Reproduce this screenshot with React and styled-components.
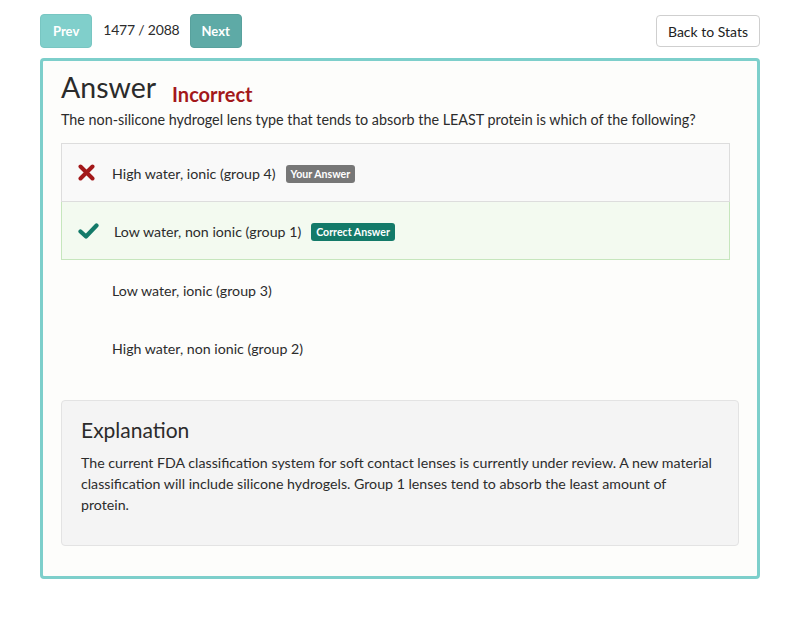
import React from "react";
import styled, { createGlobalStyle } from "styled-components";

const Global = createGlobalStyle`
  html, body { margin: 0; padding: 0; background: #ffffff; }
  body { font-family: Lato, "Open Sans", sans-serif; color: #2c2c2c; font-size: 14px; }
  * { box-sizing: border-box; }
`;

const Page = styled.div`
  width: 800px;
  padding: 14px 40px 40px 40px;
`;

const TopBar = styled.div`
  display: flex;
  align-items: center;
  height: 34px;
  margin-bottom: 10px;
`;

const NavButton = styled.button`
  font-family: Lato, sans-serif;
  font-weight: 700;
  font-size: 13px;
  color: #ffffff;
  background: ${(p) => (p.$dim ? "#80cfcb" : "#5eaaa6")};
  border: 1px solid ${(p) => (p.$dim ? "#78c6c2" : "#58a19d")};
  border-radius: 4px;
  height: 34px;
  padding: 0 ${(p) => (p.$dim ? "12px" : "11px")};
  cursor: pointer;
`;

const Counter = styled.span`
  font-size: 14px;
  letter-spacing: -0.2px;
  color: #2c2c2c;
  margin: 0 10px 0 11px;
  position: relative;
  top: -2px;
`;

const Spacer = styled.div`
  flex: 1;
`;

const OutlineButton = styled.button`
  font-family: Lato, sans-serif;
  font-size: 14px;
  color: #222;
  background: #fff;
  border: 1px solid #cfcfcf;
  border-radius: 4px;
  height: 32px;
  padding: 0 11px;
`;

const Card = styled.div`
  border: 3px solid #7dcfcb;
  border-radius: 4px;
  background: #fdfdfb;
  padding: 6px 18px 30px 18px;
`;

const HeaderRow = styled.div`
  display: flex;
  align-items: baseline;
  gap: 16px;
  height: 40px;
`;

const Title = styled.h1`
  margin: 0;
  font-weight: 400;
  font-size: 28.5px;
  color: #2b2b2b;
  line-height: 40px;
`;

const Status = styled.span`
  font-weight: 700;
  font-size: 20px;
  color: #a3181a;
  position: relative;
  top: 4px;
`;

const Question = styled.p`
  margin: 3px 0 13px 0;
  font-size: 14.35px;
  line-height: 20px;
  color: #2c2c2c;
`;

const List = styled.div`
  display: flex;
  flex-direction: column;
  margin-right: 9px;
  margin-bottom: 24px;
`;

const Option = styled.div`
  display: flex;
  align-items: center;
  height: ${(p) => (p.$first ? "59px" : "58px")};
  padding-left: 16px;
  padding-top: 2px;
  background: ${(p) =>
    p.$kind === "wrong" ? "#f9f9f9" : p.$kind === "correct" ? "#f3faf0" : "transparent"};
  border: 1px solid
    ${(p) => (p.$kind === "wrong" ? "#dddddd" : p.$kind === "correct" ? "#c6e6bd" : "transparent")};
  border-top: ${(p) => (p.$kind === "correct" ? "none" : undefined)};
  font-size: 14.2px;
  color: #2c2c2c;
`;

const IconSlot = styled.span`
  width: 34px;
  display: inline-flex;
  align-items: center;
  justify-content: flex-start;
  margin-right: ${(p) => p.$mr || "0px"};
  position: relative;
  top: -1px;
`;

const Badge = styled.span`
  display: inline-block;
  margin-left: 10px;
  padding: 0 5px;
  height: 18px;
  line-height: 18px;
  font-size: 10.6px;
  font-weight: 700;
  color: #fff;
  border-radius: 3px;
  background: ${(p) => (p.$tone === "green" ? "#137a69" : "#777777")};
`;

const Explanation = styled.div`
  background: #f4f4f4;
  border: 1px solid #e3e3e3;
  border-radius: 4px;
  padding: 16px 17px 20px 19px;
  min-height: 146px;
`;

const ExplTitle = styled.h3`
  margin: 0 0 9px 0;
  font-weight: 400;
  font-size: 21px;
  line-height: 26px;
  color: #2b2b2b;
`;

const ExplText = styled.p`
  margin: 0;
  max-width: 634px;
  font-size: 14.2px;
  line-height: 21px;
  color: #2c2c2c;
`;

const Cross = () => (
  <svg width="17" height="17" viewBox="0 0 17 17">
    <path d="M2.5 2.5 L14.5 14.5 M14.5 2.5 L2.5 14.5" stroke="#a3181a" strokeWidth="4" strokeLinecap="round" />
  </svg>
);

const Check = () => (
  <svg width="21" height="16" viewBox="0 0 21 16">
    <path d="M2.5 8.5 L8 13.5 L18.5 2.5" stroke="#137a69" strokeWidth="4.2" fill="none" strokeLinecap="round" strokeLinejoin="round" />
  </svg>
);

export default function App() {
  return (
    <>
      <Global />
      <Page>
        <TopBar>
          <NavButton $dim>Prev</NavButton>
          <Counter>1477 / 2088</Counter>
          <NavButton>Next</NavButton>
          <Spacer />
          <OutlineButton>Back to Stats</OutlineButton>
        </TopBar>
        <Card>
          <HeaderRow>
            <Title>Answer</Title>
            <Status>Incorrect</Status>
          </HeaderRow>
          <Question>
            The non-silicone hydrogel lens type that tends to absorb the LEAST protein is which of the following?
          </Question>
          <List>
            <Option $kind="wrong" $first>
              <IconSlot>
                <Cross />
              </IconSlot>
              High water, ionic (group 4)
              <Badge>Your Answer</Badge>
            </Option>
            <Option $kind="correct">
              <IconSlot $mr="2px">
                <Check />
              </IconSlot>
              Low water, non ionic (group 1)
              <Badge $tone="green">Correct Answer</Badge>
            </Option>
            <Option>
              <IconSlot />
              Low water, ionic (group 3)
            </Option>
            <Option>
              <IconSlot />
              High water, non ionic (group 2)
            </Option>
          </List>
          <Explanation>
            <ExplTitle>Explanation</ExplTitle>
            <ExplText>
              The current FDA classification system for soft contact lenses is currently under review. A new material
              classification will include silicone hydrogels. Group 1 lenses tend to absorb the least amount of protein.
            </ExplText>
          </Explanation>
        </Card>
      </Page>
    </>
  );
}
